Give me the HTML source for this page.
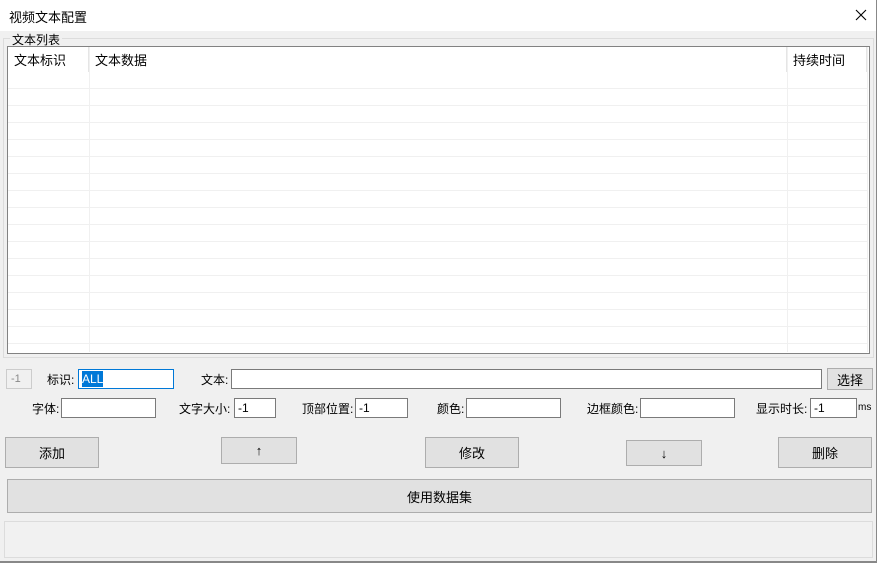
<!DOCTYPE html>
<html><head><meta charset="utf-8"><style>
*{box-sizing:border-box;margin:0;padding:0}
body{width:877px;height:563px;background:#f0f0f0;font:12px "Liberation Sans","Noto Sans CJK SC",sans-serif;color:#000;position:relative;overflow:hidden;border-right:1px solid #888}
.a{position:absolute;white-space:nowrap}
.title{left:0;top:0;width:876px;height:31px;background:#fff}
.inp{position:absolute;height:20px;background:#fff;border:1px solid #7a7a7a;line-height:17px}
.btn{position:absolute;background:#e1e1e1;border:1px solid #adadad;display:flex;align-items:center;justify-content:center;font-size:13px}
.hl{position:absolute;left:8px;width:860px;height:1px;background:#f0f0f0}
.vl{position:absolute;top:47px;width:1px;height:305px;background:#f0f0f0}
.lb{position:absolute;white-space:nowrap;font-size:12px}
</style></head><body>
<div class="a title"></div>
<div class="a" style="left:9px;top:7px;font-size:13px">视频文本配置</div>
<svg class="a" style="left:855px;top:9px" width="12" height="12" viewBox="0 0 12 12"><path d="M1 1L11 11M11 1L1 11" stroke="#000" stroke-width="1.1" fill="none"/></svg>
<div class="a" style="left:3px;top:38px;width:871px;height:320px;border:1px solid #dcdcdc"></div>
<div class="a" style="left:10px;top:31px;background:#f0f0f0;padding:0 2px">文本列表</div>
<div class="a" style="left:7px;top:46px;width:863px;height:308px;background:#fff;border:1px solid #828282"></div>
<div class="vl" style="left:89px"></div><div class="vl" style="left:787px"></div><div class="vl" style="left:867px"></div>
<div class="a" style="left:88px;top:47px;width:1px;height:25px;background:#e5e5e5"></div>
<div class="a" style="left:786px;top:47px;width:1px;height:25px;background:#e5e5e5"></div>
<div class="a" style="left:866px;top:47px;width:1px;height:25px;background:#e5e5e5"></div>
<div id="rows"></div>
<div class="a" style="left:14px;top:50px;font-size:13px">文本标识</div>
<div class="a" style="left:95px;top:50px;font-size:13px">文本数据</div>
<div class="a" style="left:793px;top:50px;font-size:13px">持续时间</div>
<script>var s='';for(var y=88;y<352;y+=17)s+='<div class="hl" style="top:'+y+'px"></div>';document.getElementById('rows').innerHTML=s;</script>

<div class="a" style="left:6px;top:369px;width:26px;height:20px;border:1px solid #ccc;color:#888;padding:3px 0 0 4px;font-size:11px">-1</div>
<div class="lb" style="left:47px;top:371px">标识:</div>
<div class="inp" style="left:78px;top:369px;width:96px;border-color:#0078d7"><span style="background:#0078d7;color:#fff;position:absolute;left:3px;top:1px;font-size:12px;line-height:16px">ALL</span></div>
<div class="lb" style="left:201px;top:371px">文本:</div>
<div class="inp" style="left:231px;top:369px;width:591px"></div>
<div class="btn" style="left:827px;top:368px;width:46px;height:22px">选择</div>

<div class="lb" style="left:32px;top:400px">字体:</div>
<div class="inp" style="left:61px;top:398px;width:95px"></div>
<div class="lb" style="left:179px;top:400px">文字大小:</div>
<div class="inp" style="left:234px;top:398px;width:42px;padding:1px 3px">-1</div>
<div class="lb" style="left:302px;top:400px">顶部位置:</div>
<div class="inp" style="left:355px;top:398px;width:53px;padding:1px 3px">-1</div>
<div class="lb" style="left:437px;top:400px">颜色:</div>
<div class="inp" style="left:466px;top:398px;width:95px"></div>
<div class="lb" style="left:587px;top:400px">边框颜色:</div>
<div class="inp" style="left:640px;top:398px;width:95px"></div>
<div class="lb" style="left:756px;top:400px">显示时长:</div>
<div class="inp" style="left:810px;top:398px;width:47px;padding:1px 3px">-1</div>
<div class="a" style="left:858px;top:402px;font-size:10px">ms</div>

<div class="btn" style="left:5px;top:437px;width:94px;height:31px">添加</div>
<div class="btn" style="left:221px;top:437px;width:76px;height:27px">↑</div>
<div class="btn" style="left:425px;top:437px;width:94px;height:31px">修改</div>
<div class="btn" style="left:626px;top:440px;width:76px;height:26px">↓</div>
<div class="btn" style="left:778px;top:437px;width:94px;height:31px">删除</div>
<div class="btn" style="left:7px;top:479px;width:865px;height:34px">使用数据集</div>
<div class="a" style="left:4px;top:521px;width:869px;height:37px;border:1px solid #dcdcdc;background:#f1f1f1"></div>
<div class="a" style="left:0;top:561px;width:877px;height:2px;background:#888"></div>
</body></html>
